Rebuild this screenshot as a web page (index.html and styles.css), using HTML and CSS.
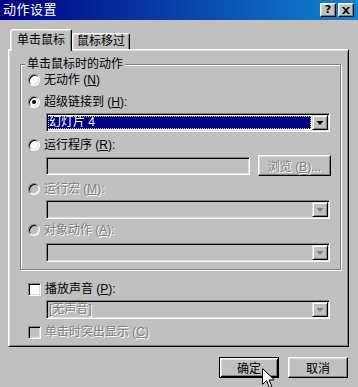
FILE: index.html
```html
<!DOCTYPE html>
<html lang="zh-CN">
<head>
  <meta charset="UTF-8">
  <title>动作设置</title>
  <link rel="stylesheet" href="styles.css">
</head>
<body>
<div class="window">
  <div class="titlebar">
    <span class="title">动作设置</span>
    <div class="title-btns">
      <span class="tbtn help">?</span>
      <span class="tbtn close">
        <svg width="8" height="7" viewBox="0 0 8 7"><path d="M0 0h2l2 2 2-2h2L5 3.5 8 7H6L4 5 2 7H0l3-3.5z" fill="#000"/></svg>
      </span>
    </div>
  </div>

  <div class="body">
    <div class="tabs">
      <div class="tab active">单击鼠标</div>
      <div class="tab">鼠标移过</div>
    </div>

    <div class="panel">
      <fieldset class="group">
        <legend>单击鼠标时的动作</legend>
        <div class="row"><span class="radio"></span><span>无动作 (<u>N</u>)</span></div>
        <div class="row gap8"><span class="radio on"></span><span>超级链接到 (<u>H</u>):</span></div>
        <div class="combo gap4">
          <span class="value sel">幻灯片 4</span>
          <span class="arrow"></span>
        </div>
        <div class="row gap6"><span class="radio"></span><span>运行程序 (<u>R</u>):</span></div>
        <div class="path-row">
          <span class="field"></span>
          <span class="btn small dis"><span>浏览 (<u>B</u>)...</span></span>
        </div>
        <div class="row gap6 dis"><span class="radio off"></span><span>运行宏 (<u>M</u>):</span></div>
        <div class="combo off gap4">
          <span class="value"></span>
          <span class="arrow"></span>
        </div>
        <div class="row gap4 dis"><span class="radio off"></span><span>对象动作 (<u>A</u>):</span></div>
        <div class="combo off gap6">
          <span class="value"></span>
          <span class="arrow"></span>
        </div>
      </fieldset>

      <div class="row sound"><span class="check"></span><span>播放声音 (<u>P</u>):</span></div>
      <div class="combo off wide gap4">
        <span class="value dis">[无声音]</span>
        <span class="arrow"></span>
      </div>
      <div class="row sound gap6 dis"><span class="check off"></span><span>单击时突出显示 (<u>C</u>)</span></div>
    </div>

    <div class="actions">
      <button class="btn default">确定</button>
      <button class="btn">取消</button>
    </div>
  </div>

  <svg class="cursor" width="12" height="20" viewBox="0 0 12 20">
    <path d="M0.5 0.5v16l4-4 3 7 2.5-1-3-6.5h5.5z" fill="#fff" stroke="#000" stroke-width="1"/>
  </svg>
</div>
</body>
</html>
```

FILE: styles.css
```css
* {
  box-sizing: border-box;
}

body {
  margin: 0;
  background: #c0c0c0;
  font-family: "Liberation Sans", "Noto Sans CJK SC", sans-serif;
  font-size: 12px;
  color: #000;
}

.window {
  position: relative;
  width: 358px;
  height: 387px;
  overflow: hidden;
  background: #c0c0c0;
}

/* title bar */
.titlebar {
  display: flex;
  align-items: center;
  justify-content: space-between;
  height: 20px;
  padding: 0 4px 0 3px;
  background: linear-gradient(to right, #000080, #1084d0);
  color: #fff;
}

.title {
  font-size: 13px;
  line-height: 20px;
  letter-spacing: 0.5px;
}

.title-btns {
  display: flex;
  gap: 2px;
}

.tbtn {
  display: flex;
  align-items: center;
  justify-content: center;
  width: 16px;
  height: 14px;
  border: 1px solid;
  border-color: #fff #000 #000 #fff;
  box-shadow: inset -1px -1px #808080, inset 1px 1px #dfdfdf;
  background: #c0c0c0;
  color: #000;
  font-family: "DejaVu Sans", sans-serif;
  font-size: 11px;
  font-weight: bold;
  line-height: 12px;
}

/* body + tabs */
.body {
  padding: 9px 0 0 8px;
}

.tabs {
  display: flex;
  align-items: flex-end;
  height: 20px;
  padding-left: 2px;
}

.tab {
  height: 16px;
  padding: 0 4px;
  border: 1px solid;
  border-bottom: 0;
  border-color: #fff #000 transparent #fff;
  border-radius: 2px 2px 0 0;
  box-shadow: inset -1px 0 #808080, inset 1px 1px #dfdfdf;
  line-height: 15px;
}

.tab.active {
  position: relative;
  z-index: 1;
  height: 22px;
  margin-bottom: -2px;
  padding: 2px 6px 0;
  background: #c0c0c0;
  line-height: 16px;
}

.panel {
  width: 341px;
  height: 298px;
  padding: 7px 7px 0 11px;
  border: 1px solid;
  border-color: #fff #000 #000 #fff;
  box-shadow: inset 1px 1px #dfdfdf, inset -1px -1px #808080;
}

/* group box */
.group {
  margin: 0;
  padding: 2px 10px 7px 7px;
  border: 1px solid #808080;
  box-shadow: 1px 1px #fff, inset 1px 1px #fff;
}

.group legend {
  margin-left: -3px;
  padding: 0 2px;
  line-height: 14px;
  background: #c0c0c0;
}

.row {
  display: flex;
  align-items: center;
  gap: 4px;
  height: 14px;
  line-height: 14px;
  white-space: nowrap;
}

.gap4 { margin-top: 4px; }
.gap6 { margin-top: 6px; }
.gap8 { margin-top: 8px; }

.sound {
  margin-top: 12px;
  margin-left: 8px;
}

.sound.gap6 {
  margin-top: 6px;
}

.dis {
  color: #808080;
  text-shadow: 1px 1px 0 #fff;
}

/* radio + check */
.radio, .check {
  flex: none;
  position: relative;
  width: 12px;
  height: 12px;
  border: 1px solid;
  border-color: #808080 #fff #fff #808080;
  box-shadow: inset 1px 1px #000, inset -1px -1px #dfdfdf;
  background: #fff;
  border-radius: 50%;
}

.radio.on::after {
  content: "";
  position: absolute;
  left: 3px;
  top: 3px;
  width: 4px;
  height: 4px;
  border-radius: 50%;
  background: #000;
}

.check {
  width: 13px;
  height: 13px;
  border-radius: 0;
}

.radio.off, .check.off {
  background: #c0c0c0;
}

/* combo boxes */
.combo {
  display: flex;
  height: 19px;
  margin-left: 18px;
  padding: 1px;
  border: 1px solid;
  border-color: #808080 #fff #fff #808080;
  box-shadow: inset 1px 1px #000, inset -1px -1px #dfdfdf;
  background: #fff;
}

.combo.off {
  background: #c0c0c0;
}

.combo.wide {
  margin-left: 26px;
  margin-right: 11px;
}

.value {
  flex: 1;
  padding-left: 1px;
  line-height: 15px;
  white-space: nowrap;
}

.value.sel {
  margin: 1px 1px 1px 0;
  padding-left: 0;
  border: 1px dotted #c0c0c0;
  background: #000080;
  color: #fff;
  line-height: 11px;
}

.arrow {
  display: flex;
  align-items: center;
  justify-content: center;
  width: 16px;
  height: 15px;
  border: 1px solid;
  border-color: #dfdfdf #000 #000 #dfdfdf;
  box-shadow: inset 1px 1px #fff, inset -1px -1px #808080;
  background: #c0c0c0;
}

.arrow::after {
  content: "";
  width: 7px;
  height: 4px;
  margin-top: 1px;
  background: #000;
  clip-path: polygon(0 0, 100% 0, 50% 100%);
}

.combo.off .arrow::after {
  background: #808080;
}

/* program path row */
.path-row {
  display: flex;
  align-items: center;
  justify-content: space-between;
  height: 21px;
  margin: 3px 0 0 18px;
}

.field {
  width: 204px;
  height: 18px;
  border: 1px solid;
  border-color: #808080 #fff #fff #808080;
  box-shadow: inset 1px 1px #000, inset -1px -1px #dfdfdf;
  background: #c0c0c0;
}

/* buttons */
.btn {
  display: flex;
  align-items: center;
  justify-content: center;
  width: 60px;
  height: 21px;
  padding: 0;
  border: 1px solid;
  border-color: #fff #000 #000 #fff;
  box-shadow: inset -1px -1px #808080, inset 1px 1px #dfdfdf;
  background: #c0c0c0;
  font-family: inherit;
  font-size: 12px;
  color: #000;
}

.btn.small {
  width: 73px;
  margin-right: -1px;
}

.btn.small.dis {
  color: #808080;
}

.btn.default {
  border: 1px solid #000;
  box-shadow: inset 1px 1px #fff, inset -1px -1px #000, inset 2px 2px #dfdfdf, inset -2px -2px #808080;
}

.actions {
  display: flex;
  justify-content: flex-end;
  gap: 9px;
  width: 341px;
  margin-top: 10px;
  padding-right: 1px;
}

.cursor {
  position: absolute;
  left: 262px;
  top: 368px;
}
```
